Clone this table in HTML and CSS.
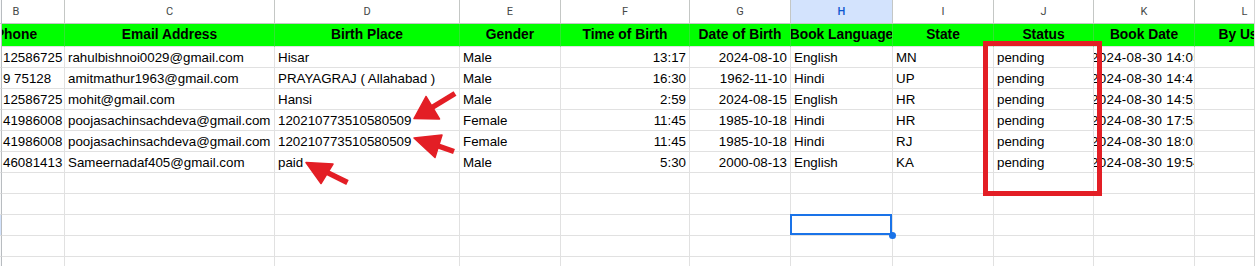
FILE: index.html
```html
<!DOCTYPE html>
<html>
<head>
<meta charset="utf-8">
<link rel="stylesheet" href="styles.css">
</head>
<body>
<div class="sheet">
  <div class="row colhead">
    <div class="rh"></div>
    <div class="cl cl-b">B</div><div class="cl">C</div><div class="cl">D</div><div class="cl">E</div><div class="cl">F</div><div class="cl">G</div><div class="cl cl-sel">H</div><div class="cl">I</div><div class="cl">J</div><div class="cl">K</div><div class="cl">L</div>
  </div>
  <div class="row head">
    <div class="rh"></div>
    <div class="hc hc-b"><span>Phone</span></div><div class="hc"><span>Email Address</span></div><div class="hc"><span>Birth Place</span></div><div class="hc"><span>Gender</span></div><div class="hc"><span>Time of Birth</span></div><div class="hc"><span>Date of Birth</span></div><div class="hc"><span>Book Language</span></div><div class="hc"><span>State</span></div><div class="hc"><span>Status</span></div><div class="hc"><span>Book Date</span></div><div class="hc"><span>By User</span></div>
  </div>
  <div class="row data">
    <div class="rh"></div>
    <div class="dc dc-b">12586725</div><div class="dc">rahulbishnoi0029@gmail.com</div><div class="dc">Hisar</div><div class="dc">Male</div><div class="dc num">13:17</div><div class="dc num">2024-08-10</div><div class="dc">English</div><div class="dc">MN</div><div class="dc">pending</div><div class="dc dt"><span>2024-08-30 14:05:12</span></div><div class="dc"></div>
  </div>
  <div class="row data">
    <div class="rh"></div>
    <div class="dc dc-b">9 75128</div><div class="dc">amitmathur1963@gmail.com</div><div class="dc">PRAYAGRAJ ( Allahabad )</div><div class="dc">Male</div><div class="dc num">16:30</div><div class="dc num">1962-11-10</div><div class="dc">Hindi</div><div class="dc">UP</div><div class="dc">pending</div><div class="dc dt"><span>2024-08-30 14:41:37</span></div><div class="dc"></div>
  </div>
  <div class="row data">
    <div class="rh"></div>
    <div class="dc dc-b">12586725</div><div class="dc">mohit@gmail.com</div><div class="dc">Hansi</div><div class="dc">Male</div><div class="dc num">2:59</div><div class="dc num">2024-08-15</div><div class="dc">English</div><div class="dc">HR</div><div class="dc">pending</div><div class="dc dt"><span>2024-08-30 14:52:08</span></div><div class="dc"></div>
  </div>
  <div class="row data">
    <div class="rh"></div>
    <div class="dc dc-b">41986008</div><div class="dc">poojasachinsachdeva@gmail.com</div><div class="dc">120210773510580509</div><div class="dc">Female</div><div class="dc num">11:45</div><div class="dc num">1985-10-18</div><div class="dc">Hindi</div><div class="dc">HR</div><div class="dc">pending</div><div class="dc dt"><span>2024-08-30 17:58:44</span></div><div class="dc"></div>
  </div>
  <div class="row data">
    <div class="rh"></div>
    <div class="dc dc-b">41986008</div><div class="dc">poojasachinsachdeva@gmail.com</div><div class="dc">120210773510580509</div><div class="dc">Female</div><div class="dc num">11:45</div><div class="dc num">1985-10-18</div><div class="dc">Hindi</div><div class="dc">RJ</div><div class="dc">pending</div><div class="dc dt"><span>2024-08-30 18:03:21</span></div><div class="dc"></div>
  </div>
  <div class="row data">
    <div class="rh"></div>
    <div class="dc dc-b">46081413</div><div class="dc">Sameernadaf405@gmail.com</div><div class="dc">paid</div><div class="dc">Male</div><div class="dc num">5:30</div><div class="dc num">2000-08-13</div><div class="dc">English</div><div class="dc">KA</div><div class="dc">pending</div><div class="dc dt"><span>2024-08-30 19:54:50</span></div><div class="dc"></div>
  </div>
  <div class="row data">
    <div class="rh"></div>
    <div class="dc"></div><div class="dc"></div><div class="dc"></div><div class="dc"></div><div class="dc"></div><div class="dc"></div><div class="dc"></div><div class="dc"></div><div class="dc"></div><div class="dc"></div><div class="dc"></div>
  </div>
  <div class="row data">
    <div class="rh"></div>
    <div class="dc"></div><div class="dc"></div><div class="dc"></div><div class="dc"></div><div class="dc"></div><div class="dc"></div><div class="dc"></div><div class="dc"></div><div class="dc"></div><div class="dc"></div><div class="dc"></div>
  </div>
  <div class="row data">
    <div class="rh rh-sel"></div>
    <div class="dc"></div><div class="dc"></div><div class="dc"></div><div class="dc"></div><div class="dc"></div><div class="dc"></div><div class="dc selected"></div><div class="dc"></div><div class="dc"></div><div class="dc"></div><div class="dc"></div>
  </div>
  <div class="row data">
    <div class="rh"></div>
    <div class="dc"></div><div class="dc"></div><div class="dc"></div><div class="dc"></div><div class="dc"></div><div class="dc"></div><div class="dc"></div><div class="dc"></div><div class="dc"></div><div class="dc"></div><div class="dc"></div>
  </div>
  <div class="row data">
    <div class="rh"></div>
    <div class="dc"></div><div class="dc"></div><div class="dc"></div><div class="dc"></div><div class="dc"></div><div class="dc"></div><div class="dc"></div><div class="dc"></div><div class="dc"></div><div class="dc"></div><div class="dc"></div>
  </div>

  <svg class="marks" width="1255" height="266" viewBox="0 0 1255 266">
    <rect x="985.5" y="43.5" width="114" height="150" fill="none" stroke="#e31e25" stroke-width="5"/>
    <g fill="#e31e25" stroke="#e31e25">
      <line x1="455" y1="93.5" x2="432" y2="107.5" stroke-width="5.5"/>
      <polygon points="414,118.5 439.5,119 426,96.5" stroke-width="1.5" stroke-linejoin="round"/>
      <line x1="454" y1="151.5" x2="434" y2="144.5" stroke-width="5.5"/>
      <polygon points="414,138 442,135 435,157.5" stroke-width="1.5" stroke-linejoin="round"/>
      <line x1="347.5" y1="182.5" x2="327" y2="172.4" stroke-width="5.5"/>
      <polygon points="306,162.5 333,164 321,183.5" stroke-width="1.5" stroke-linejoin="round"/>
    </g>
  </svg>
</div>
</body>
</html>
```

FILE: styles.css
```css
* { box-sizing: border-box; }
html, body { margin: 0; padding: 0; background: #fff; }

.sheet {
  position: relative;
  width: 1255px;
  height: 266px;
  overflow: hidden;
  font-family: "Liberation Sans", Arial, sans-serif;
  color: #000;
}
.sheet::after {
  content: "";
  position: absolute;
  top: 0;
  bottom: 0;
  left: 1254px;
  width: 1px;
  background: #d5d5d5;
}

.row {
  display: grid;
  grid-template-columns: 2px 63px 210px 185px 101px 129px 101px 102px 101px 100px 101px 100px;
  width: 1295px;
}

.rh {
  background: #f8f9fa;
  border-right: 1px solid #b8bcc0;
}
.colhead .rh { border-bottom: 1px solid #c4c7c5; }
.data .rh { border-bottom: 1px solid #e1e1e1; }
.rh-sel { background: #d3e3fd; }

/* column letters */
.colhead { height: 24px; }
.cl {
  height: 24px;
  border-right: 1px solid #c4c7c5;
  border-bottom: 1px solid #c4c7c5;
  display: flex;
  align-items: center;
  justify-content: center;
  font-family: Roboto, "Liberation Sans", Arial, sans-serif;
  font-size: 11px;
  color: #444746;
}
.cl-b { padding-right: 34px; }
.cl-sel { background: #d3e3fd; color: #0b57d0; font-weight: 500; }

/* green header */
.head { height: 23px; }
.hc {
  height: 23px;
  background: #00ff00;
  border-right: 1px solid #2fe62f;
  border-bottom: 1px solid #e1e1e1;
  display: flex;
  justify-content: center;
  align-items: flex-end;
  overflow: hidden;
  white-space: nowrap;
  font-weight: bold;
  font-size: 13.8px;
  line-height: 22px;
}
.hc span { flex-shrink: 0; }
.hc-b { padding-right: 34px; }

/* data */
.data { height: 21px; }
.dc {
  height: 21px;
  border-right: 1px solid #e1e1e1;
  border-bottom: 1px solid #e1e1e1;
  padding: 0 3px;
  font-size: 13.33px;
  line-height: 21px;
  white-space: nowrap;
  overflow: hidden;
}
.dc-b { padding-left: 1px; }
.num { text-align: right; }
.dt { padding: 0; }
.dt span { display: inline-block; margin-left: -3px; letter-spacing: 0.3px; }

.selected { position: relative; overflow: visible; }
.selected::before {
  content: "";
  position: absolute;
  top: -1px;
  left: -1px;
  right: 0;
  bottom: 0;
  border: 2px solid #1a73e8;
}
.selected::after {
  content: "";
  position: absolute;
  right: -4px;
  bottom: -4px;
  width: 7px;
  height: 7px;
  border-radius: 50%;
  background: #1a73e8;
  z-index: 2;
}

.marks {
  position: absolute;
  left: 0;
  top: 0;
  pointer-events: none;
}
```
